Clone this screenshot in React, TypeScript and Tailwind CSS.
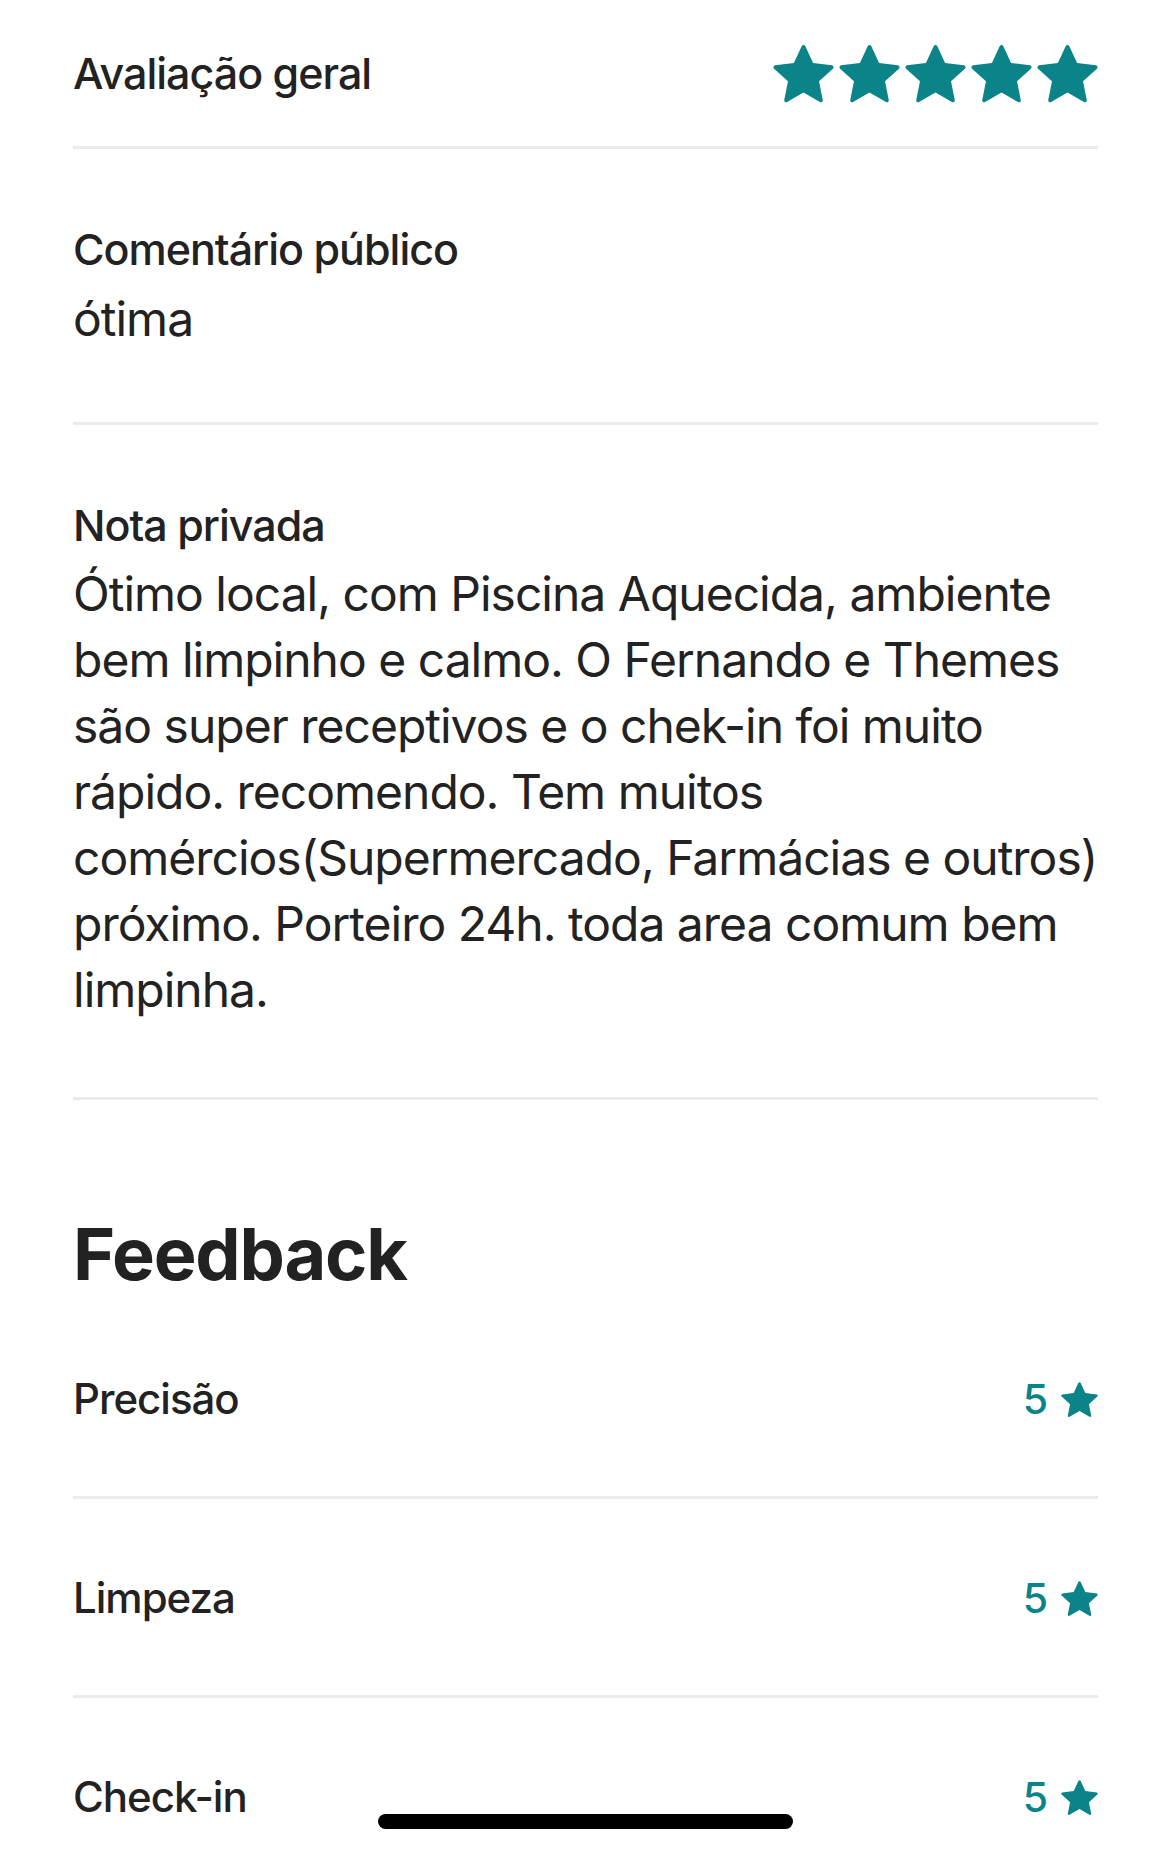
import React from "react";

const STAR =
  "M15.094 1.579l-4.124 8.885-9.86 1.27a1 1 0 0 0-.542 1.736l7.293 6.565-1.965 9.852a1 1 0 0 0 1.483 1.061L16 25.951l8.625 4.997a1 1 0 0 0 1.482-1.06l-1.965-9.853 7.293-6.565a1 1 0 0 0-.541-1.735l-9.86-1.271-4.127-8.885a1 1 0 0 0-1.814 0z";

function Star({ className }: { className: string }) {
  return (
    <svg viewBox="0 0 32 32" className={className} aria-hidden="true">
      <path d={STAR} fill="#0b8489" />
    </svg>
  );
}

function Divider() {
  return <div className="h-[3px] bg-[#ebebeb]" />;
}

function FeedbackRow({ label, last }: { label: string; last?: boolean }) {
  return (
    <div>
      <div className="flex items-center justify-between h-[56px] mt-[71px] mb-[69px]">
        <span className="text-[42px] leading-[56px] font-medium tracking-[-1px] text-[#222222]">
          {label}
        </span>
        <span className="flex items-center gap-[13px]">
          <span className="text-[41px] leading-[56px] font-medium text-[#0b8489]">5</span>
          <Star className="w-[37px] h-[37px]" />
        </span>
      </div>
      {!last && <Divider />}
    </div>
  );
}

const bodyLines = [
  "Ótimo local, com Piscina Aquecida, ambiente",
  "bem limpinho e calmo. O Fernando e Themes",
  "são super receptivos e o chek-in foi muito",
  "rápido. recomendo. Tem muitos",
  "comércios(Supermercado, Farmácias e outros)",
  "próximo. Porteiro 24h. toda area comum bem",
  "limpinha.",
];

export default function App() {
  return (
    <div
      className="relative w-[1170px] h-[1851px] overflow-hidden bg-white text-[#222222]"
      style={{ fontFamily: "Inter, 'Noto Sans', sans-serif" }}
    >
      <div className="pl-[73px] pr-[72px]">
        <div className="flex items-center justify-between h-[146px]">
          <span className="text-[43px] leading-[56px] font-medium tracking-[-1px]">Avaliação geral</span>
          <div className="flex gap-[5px]">
            <Star className="w-[61px] h-[61px]" />
            <Star className="w-[61px] h-[61px]" />
            <Star className="w-[61px] h-[61px]" />
            <Star className="w-[61px] h-[61px]" />
            <Star className="w-[61px] h-[61px]" />
          </div>
        </div>
        <Divider />

        <div className="pt-[72px] pb-[70px]">
          <div className="text-[43px] leading-[56px] font-medium tracking-[-1px]">Comentário público</div>
          <div className="mt-[9px] text-[48px] leading-[66px] tracking-[-1px]">ótima</div>
        </div>
        <Divider />

        <div className="pt-[72px] pb-[74px]">
          <div className="text-[43px] leading-[56px] font-medium tracking-[-1px]">Nota privada</div>
          <div className="mt-[8px] text-[48px] leading-[66px] tracking-[-1px]">
            {bodyLines.map((l) => (
              <div key={l} className="whitespace-nowrap">
                {l}
              </div>
            ))}
          </div>
        </div>
        <Divider />

        <div className="mt-[114px] text-[72px] leading-[80px] font-bold tracking-[-1.2px]">Feedback</div>
        <div className="pt-[6px]">
          <FeedbackRow label="Precisão" />
          <FeedbackRow label="Limpeza" />
          <FeedbackRow label="Check-in" last />
        </div>
      </div>

      <div className="absolute left-[378px] top-[1814px] w-[415px] h-[15px] rounded-full bg-black" />
    </div>
  );
}
